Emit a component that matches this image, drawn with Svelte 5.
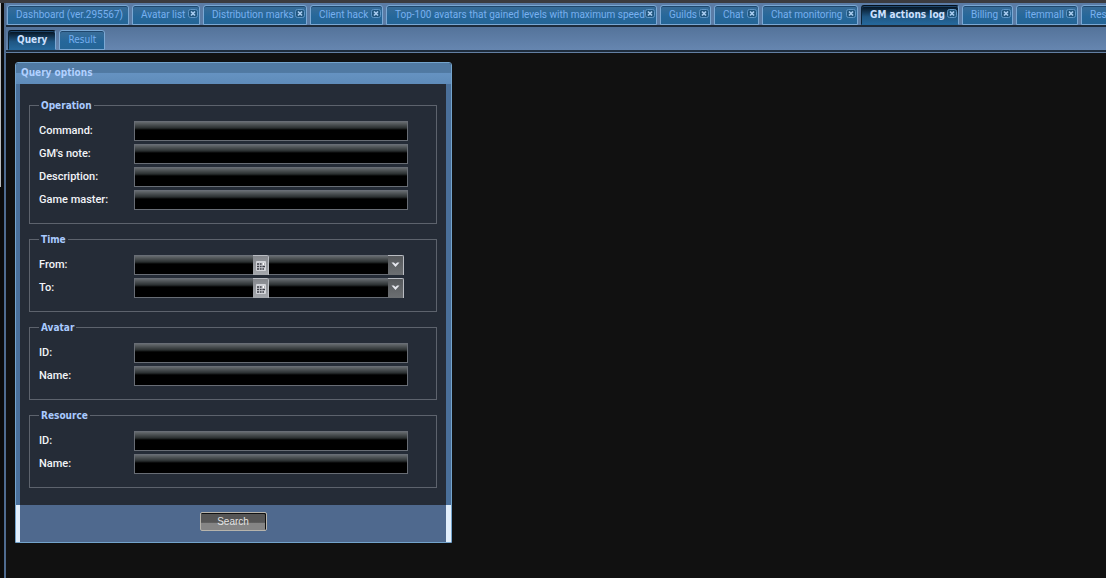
<script>
  const tabs = [
    { title: 'Dashboard (ver.295567)', width: 122, fixed: true },
    { title: 'Avatar list', width: 68 },
    { title: 'Distribution marks', width: 104 },
    { title: 'Client hack', width: 73 },
    { title: 'Top-100 avatars that gained levels with maximum speed', width: 271 },
    { title: 'Guilds', width: 51 },
    { title: 'Chat', width: 45 },
    { title: 'Chat monitoring', width: 96 },
    { title: 'GM actions log', width: 98 },
    { title: 'Billing', width: 51 },
    { title: 'itemmall', width: 62 },
    { title: 'Resources', width: 70 }
  ];
  let current = $state('GM actions log');
  let view = $state('Query');

  const groups = [
    { name: 'Operation', fields: ['Command', "GM's note", 'Description', 'Game master'] },
    { name: 'Time', range: true, fields: ['From', 'To'] },
    { name: 'Avatar', fields: ['ID', 'Name'] },
    { name: 'Resource', fields: ['ID', 'Name'] }
  ];
</script>

<div class="app">
  <div class="splitter"><span></span></div>
  <main>
    <nav class="strip">
      {#each tabs as tab}
        <div class="tab" class:active={tab.title === current} style:width="{tab.width}px">
          <button class="title" onclick={() => (current = tab.title)}>{tab.title}</button>
          {#if !tab.fixed}
            <button class="close" aria-label="Close {tab.title}">
              <svg width="10" height="9" viewBox="0 0 10 9">
                <rect x="0.5" y="0.5" width="9" height="8" rx="2" fill="#20567e" stroke="#5f96c6" />
                <path d="M3 2.5l4 4M7 2.5l-4 4" stroke="#a9cdf0" stroke-width="1.7" />
              </svg>
            </button>
          {/if}
        </div>
      {/each}
    </nav>
    <nav class="strip sub">
      {#each ['Query', 'Result'] as name}
        <div class="tab" class:active={name === view}>
          <button class="title" onclick={() => (view = name)}>{name}</button>
        </div>
      {/each}
    </nav>

    <div class="content">
      <form class="panel" onsubmit={(e) => e.preventDefault()}>
        <h1>Query options</h1>
        <div class="body">
          {#each groups as group}
            <fieldset>
              <legend>{group.name}</legend>
              {#each group.fields as field}
                {@const id = `${group.name}-${field}`}
                <div class="row">
                  <label for={id}>{field}:</label>
                  {#if group.range}
                    <div class="part">
                      <input {id} type="text" />
                      <button type="button" class="pick date" aria-label="Pick a date">
                        <svg width="10" height="10" viewBox="0 0 10 10">
                          <rect width="10" height="10" rx="1" fill="#d3d5da" />
                          <path d="M1 3h8M1 5.5h8M1 8h7" stroke="#3c3e46" stroke-width="1.5" />
                          <path d="M3.5 1v8M6 1v8" stroke="#c9cbd2" stroke-width="0.8" />
                          <rect x="6.5" y="2" width="2" height="2" fill="#fff" />
                        </svg>
                      </button>
                    </div>
                    <div class="part">
                      <input type="text" aria-label="{field} time" />
                      <button type="button" class="pick arrow" aria-label="Pick a time">
                        <svg width="9" height="6" viewBox="0 0 9 6">
                          <path d="M0.5 0.5h2.4l1.6 1.6 1.6-1.6h2.4l-4 4.6z" fill="#e6e8ee" />
                        </svg>
                      </button>
                    </div>
                  {:else}
                    <input {id} type="text" />
                  {/if}
                </div>
              {/each}
            </fieldset>
          {/each}
        </div>
        <footer><button class="search">Search</button></footer>
      </form>
    </div>
  </main>
</div>

<style>
  :global(body) {
    margin: 0;
    background: #111;
  }
  * {
    box-sizing: border-box;
  }
  button,
  input {
    margin: 0;
    padding: 0;
    border: 0;
    background: none;
    font: inherit;
    color: inherit;
  }
  .app {
    display: flex;
    min-height: 100vh;
    overflow: hidden;
    border-top: 3px solid #3b3b3f;
    font: 10px/14px 'DejaVu Sans Condensed', 'DejaVu Sans', sans-serif;
  }
  .splitter {
    flex: none;
    width: 4px;
    background: #0b0b0b;
  }
  .splitter span {
    display: block;
    width: 1px;
    height: 184px;
    background: #b9bcc0;
  }
  main {
    flex: 1;
    min-width: 0;
    border-left: 2px solid #4f6b8f;
  }
  .strip {
    display: flex;
    gap: 3px;
    height: 24px;
    padding: 2px 1px 0;
    overflow: hidden;
    background: #5b7ca6;
    border-bottom: 2px solid #1e2c3c;
  }
  .strip.sub {
    height: 25px;
    padding: 3px 2px 0;
    background: linear-gradient(#54739a, #6686b0);
    box-shadow: 0 1px #6480a3;
    position: relative;
  }
  .tab {
    display: flex;
    justify-content: space-between;
    flex: none;
    height: 20px;
    padding: 0 1px 0 8px;
    border: 1px solid #7aa8d4;
    border-radius: 3px 3px 0 0;
    background: linear-gradient(#3a6d98, #25679a 60%, #256596);
    box-shadow: inset 0 1px #1e466c;
    color: #78b0f0;
    font-family: Roboto, sans-serif;
  }
  .sub .tab {
    padding: 0 8px;
    font-family: 'DejaVu Sans Condensed', 'DejaVu Sans', sans-serif;
  }
  .tab.active {
    background: linear-gradient(#04101c, #1f5784 60%, #25679a);
    border-color: #04101c #7aa8d4 #25679a #0c2438;
    color: #cde0ff;
    font-family: 'DejaVu Sans Condensed', 'DejaVu Sans', sans-serif;
    font-weight: bold;
  }
  .title {
    white-space: nowrap;
  }
  .close {
    align-self: flex-start;
    margin-top: 3px;
    line-height: 0;
  }
  .content {
    padding: 10px 9px;
  }
  .panel {
    width: 437px;
    max-width: 100%;
    border: 1px solid #74a4cc;
    border-radius: 3px 3px 0 0;
    overflow: hidden;
  }
  h1 {
    margin: 0;
    height: 21px;
    padding: 0 5px;
    background: linear-gradient(#5079a2 0 45%, #6592c1 50%, #5f8cba);
    color: #b1d0ff;
    font-size: 10px;
    line-height: 19px;
  }
  .body {
    display: grid;
    gap: 9px;
    padding: 15px 9px 17px;
    background: #252c37;
    border: solid #4a6f99;
    border-width: 0 5px 0 4px;
  }
  fieldset {
    min-width: 0;
    margin: 0;
    padding: 9px 9px 13px;
    border: 1px solid #5d636d;
  }
  legend {
    height: 13px;
    padding: 0 2px;
    color: #a9caff;
    font-weight: bold;
    line-height: 14px;
  }
  .row {
    display: flex;
    height: 20px;
    color: #f2f4f8;
  }
  .row + .row {
    margin-top: 3px;
  }
  label {
    flex: none;
    width: 95px;
    font: 500 11px/20px Roboto, sans-serif;
  }
  input {
    flex: 1;
    min-width: 0;
    max-width: 274px;
    height: 20px;
    padding: 0 4px;
    border: 1px solid #686d75;
    background: linear-gradient(#666b6f, #2a2f30 6px, #000 8px);
    color: #fff;
  }
  .part {
    display: flex;
    width: 135px;
  }
  .part input {
    border-right: 0;
  }
  .part + .part input {
    border-left: 0;
  }
  .pick {
    display: grid;
    place-items: center;
    width: 16px;
    height: 20px;
    border: solid #b9bcc2;
    border-width: 1px 1px 0 0;
    border-radius: 0 2px 0 0;
  }
  .date {
    background: linear-gradient(#85888d, #a6a9ae);
  }
  .arrow {
    padding-bottom: 2px;
    background: linear-gradient(#56595c, #6c6f72);
  }
  footer {
    display: flex;
    justify-content: center;
    height: 37px;
    padding-top: 7px;
    background: #4f698e;
    border: solid #e2eefb;
    border-width: 0 5px 0 4px;
  }
  .search {
    width: 67px;
    height: 19px;
    border: 1px solid #b7b4ac;
    border-radius: 2px;
    background: linear-gradient(#555 0 55%, #858585 60%);
    box-shadow: inset -1px 1px #111;
    color: #e4e4e4;
    font-family: 'Liberation Sans', Arial, sans-serif;
  }
</style>
